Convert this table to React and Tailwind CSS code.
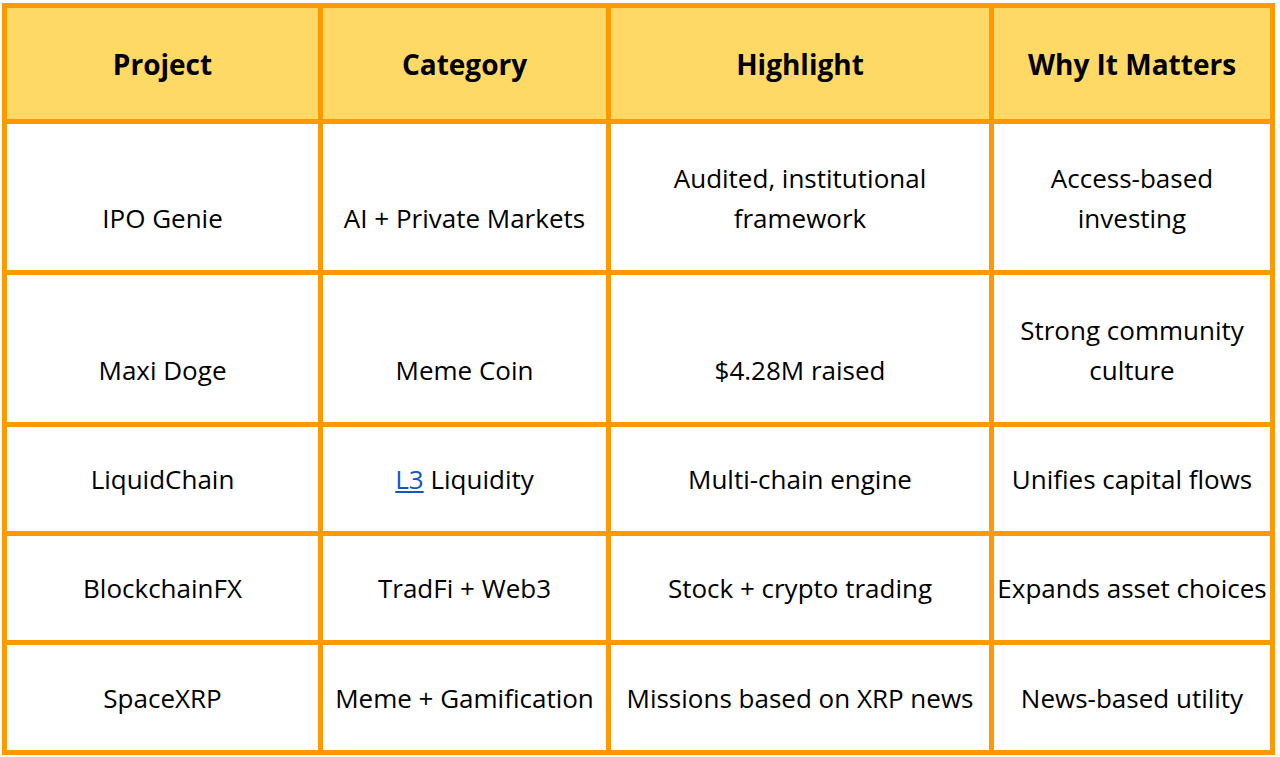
import React from 'react'

const rows = [
  ['IPO Genie', 'AI + Private Markets', ['Audited, institutional', 'framework'], ['Access-based', 'investing']],
  ['Maxi Doge', 'Meme Coin', '$4.28M raised', ['Strong community', 'culture']],
  ['LiquidChain', 'L3', 'Multi-chain engine', 'Unifies capital flows'],
  ['BlockchainFX', 'TradFi + Web3', 'Stock + crypto trading', 'Expands asset choices'],
  ['SpaceXRP', 'Meme + Gamification', 'Missions based on XRP news', 'News-based utility'],
]

function Cell({ value }) {
  if (value === 'L3') {
    return (
      <span>
        <a href="#" className="text-[#1155cc] underline">L3</a> Liquidity
      </span>
    )
  }
  if (Array.isArray(value)) {
    return (
      <span>
        {value.map((line, i) => (
          <span key={i} className="block">{line}</span>
        ))}
      </span>
    )
  }
  return <span>{value}</span>
}

export default function App() {
  const headers = ['Project', 'Category', 'Highlight', 'Why It Matters']

  return (
    <div className="w-[1280px] h-[757px] bg-white pl-[2px] pt-[3px]" style={{ fontFamily: '"Open Sans", sans-serif' }}>
      <div className="grid w-[1273px] grid-cols-[311px_283px_378px_276px] grid-rows-[111px_146px_147px_104px_104px_105px] gap-[5px] bg-[#ff9900] p-[5px] text-black">
        {headers.map((h) => (
          <div key={h} className="flex items-center justify-center bg-[#ffd966] text-[28px] font-bold leading-[40px] whitespace-nowrap">
            {h}
          </div>
        ))}
        {rows.map((row, r) =>
          row.map((value, c) => (
            <div key={r + '-' + c} className="flex items-end justify-center bg-white pb-[32px] text-center text-[26px] leading-[40px] whitespace-nowrap">
              <Cell value={value} />
            </div>
          ))
        )}
      </div>
    </div>
  )
}
